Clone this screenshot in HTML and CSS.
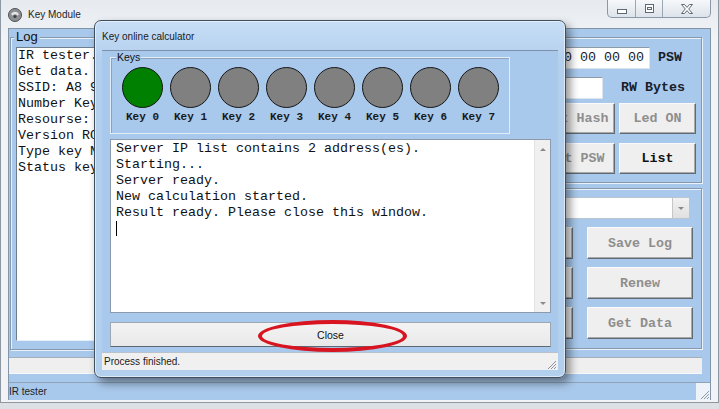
FILE: index.html
```html
<!DOCTYPE html>
<html lang="en">
<head>
<meta charset="UTF-8">
<meta name="viewport" content="width=device-width, initial-scale=1.0">
<title>Key Module</title>
<link rel="stylesheet" href="styles.css">
</head>
<body>
<div class="desktop">
    <!-- main application window -->
    <div class="main-window">
        <div class="titlebar">
            <svg class="app-icon" width="14" height="14" viewBox="0 0 14 14">
                <circle cx="7" cy="7" r="6.5" fill="#8e9093" stroke="#4d5054"/>
                <path d="M3 6 Q7 1.5 11 6 L9.5 7.5 Q7 5 4.5 7.5 Z" fill="#e6e7e8"/>
                <circle cx="7" cy="8.5" r="1.6" fill="#3e4145"/>
            </svg>
            <span class="title">Key Module</span>
            <div class="caption-buttons">
                <div class="cap">
                    <svg width="10" height="5" viewBox="0 0 10 5"><rect x="0.5" y="0.5" width="9" height="4" fill="#fff" stroke="#5d6976"/></svg>
                </div>
                <div class="cap">
                    <svg width="9" height="9" viewBox="0 0 9 9"><rect x="0.5" y="0.5" width="8" height="8" fill="#fff" stroke="#5d6976"/><rect x="2.5" y="3.5" width="4" height="2" fill="none" stroke="#5d6976"/></svg>
                </div>
                <div class="cap cap-close">
                    <svg width="12" height="10" viewBox="0 0 12 10"><path d="M0.5 0.5 H3.5 L6 3.4 L8.5 0.5 H11.5 L7.7 5 L11.5 9.5 H8.5 L6 6.6 L3.5 9.5 H0.5 L4.3 5 Z" fill="#fff" stroke="#5d6976" stroke-linejoin="round"/></svg>
                </div>
            </div>
        </div>

        <div class="client">
            <div class="content">
                <fieldset class="group log-group">
                    <legend>Log</legend>
                    <div class="log-box">
                        <div>IR tester.</div>
                        <div>Get data.</div>
                        <div>SSID: A8 9</div>
                        <div>Number Key</div>
                        <div>Resourse: </div>
                        <div>Version RO</div>
                        <div>Type key N</div>
                        <div>Status key</div>
                    </div>
                </fieldset>

                <div class="side">
                    <fieldset class="group key-group">
                        <div class="field-row">
                            <div class="field field-psw">00 00 00 00 00 00</div>
                            <span class="lbl lbl-psw">PSW</span>
                        </div>
                        <div class="field-row">
                            <div class="field field-rw"></div>
                            <span class="lbl lbl-rw">RW Bytes</span>
                        </div>
                        <div class="btn-row">
                            <button class="btn">Get Hash</button>
                            <button class="btn">Led ON</button>
                        </div>
                        <div class="btn-row">
                            <button class="btn">Set PSW</button>
                            <button class="btn on">List</button>
                        </div>
                    </fieldset>

                    <fieldset class="group data-group">
                        <div class="combo"><span class="combo-arrow"><i class="tri-down"></i></span></div>
                        <button class="btn"></button>
                        <button class="btn">Save Log</button>
                        <button class="btn"></button>
                        <button class="btn">Renew</button>
                        <button class="btn"></button>
                        <button class="btn">Get Data</button>
                    </fieldset>
                </div>
            </div>
            <div class="strip"></div>
            <div class="statusbar">
                <span>IR tester</span>
                <span class="grip">
                    <svg width="11" height="11" viewBox="0 0 11 11"><path d="M10 2 L2 10 M10 5 L5 10 M10 8 L8 10" stroke="#8c96a1" stroke-width="1"/></svg>
                </span>
            </div>
        </div>
    </div>

    <!-- modal dialog on top -->
    <div class="dialog">
        <div class="dlg-title">Key online calculator</div>
        <div class="dlg-client">
            <div class="dlg-body">
                <fieldset class="keys">
                    <legend>Keys</legend>
                    <div class="keys-row">
                        <div class="key"><div class="led active"></div><span>Key 0</span></div>
                        <div class="key"><div class="led"></div><span>Key 1</span></div>
                        <div class="key"><div class="led"></div><span>Key 2</span></div>
                        <div class="key"><div class="led"></div><span>Key 3</span></div>
                        <div class="key"><div class="led"></div><span>Key 4</span></div>
                        <div class="key"><div class="led"></div><span>Key 5</span></div>
                        <div class="key"><div class="led"></div><span>Key 6</span></div>
                        <div class="key"><div class="led"></div><span>Key 7</span></div>
                    </div>
                </fieldset>

                <div class="output">
                    <div class="output-text">
                        <div>Server IP list contains 2 address(es).</div>
                        <div>Starting...</div>
                        <div>Server ready.</div>
                        <div>New calculation started.</div>
                        <div>Result ready. Please close this window.</div>
                        <div><span class="caret"></span></div>
                    </div>
                    <div class="scroll"><i class="tri-up"></i><i class="tri-down"></i></div>
                </div>

                <button class="close-btn">Close<span class="ring"></span></button>
            </div>
            <div class="dlg-status">
                <span>Process finished.</span>
                <svg width="11" height="11" viewBox="0 0 11 11"><path d="M10 2 L2 10 M10 5 L5 10 M10 8 L8 10" stroke="#8c96a1" stroke-width="1"/></svg>
            </div>
        </div>
    </div>
</div>
</body>
</html>
```

FILE: styles.css
```css
* {
    box-sizing: border-box;
}

body {
    margin: 0;
    width: 719px;
    height: 409px;
    overflow: hidden;
    background: #dde1e6;
    font-family: "Liberation Sans", Arial, sans-serif;
}

.desktop {
    position: relative;
    width: 719px;
    height: 409px;
}

/*------------------ Main window ------------------*/
.main-window {
    height: 403px;
    display: flex;
    flex-direction: column;
    padding: 0 7px 2px 7px;
    background: linear-gradient(#e6eaef, #f1f3f6 40px);
    border: 1px solid #8e98a3;
    border-top: 0;
}

.titlebar {
    height: 28px;
    display: flex;
    align-items: flex-start;
    flex-shrink: 0;
}

.app-icon {
    margin-top: 8px;
    margin-right: 6px;
}

.title {
    margin-top: 9px;
    font-size: 10px;
    line-height: 12px;
    color: #1e1e1e;
}

.caption-buttons {
    margin-left: auto;
    display: flex;
    height: 18px;
    border: 1px solid #8a97a6;
    border-top: 0;
    border-radius: 0 0 5px 5px;
    overflow: hidden;
    background: linear-gradient(#f6f8fa, #dde3ea);
}

.cap {
    width: 27px;
    display: flex;
    align-items: center;
    justify-content: center;
}

.cap + .cap {
    border-left: 1px solid #9ba7b5;
}

.cap:first-child svg {
    margin-top: 5px;
}

.cap-close {
    width: 48px;
}

.client {
    flex: 1;
    display: flex;
    flex-direction: column;
    background: #a9c9ec;
    border: 1px solid #8395a8;
    border-bottom: 0;
}

.content {
    display: flex;
    align-items: flex-start;
    padding: 0 8px 0 1px;
}

.group {
    margin: 0;
    min-width: 0;
    border: 1px solid #8799ad;
    box-shadow: inset 1px 1px 0 #e9f1fa, 1px 1px 0 #e9f1fa;
}

.log-group {
    flex: 1;
    margin-right: 6px;
    padding: 2px 0 8px 5px;
}

.log-group legend {
    padding: 0 2px;
    margin-left: -2px;
    font-size: 13px;
    line-height: 16px;
    color: #111;
    background: #a9c9ec;
}

.log-box {
    height: 294px;
    padding-left: 1px;
    background: #fff;
    border: 1px solid #e6eef7;
    border-top-color: #6f7e8e;
    border-left-color: #6f7e8e;
    font: 13.33px/16px "Liberation Mono", "Courier New", monospace;
    color: #111;
    white-space: nowrap;
    overflow: hidden;
}

.side {
    width: 244px;
}

.key-group {
    margin-top: 8px;
    padding: 9px 5px 8px 5px;
    display: flex;
    flex-direction: column;
}

.field-row,
.btn-row {
    display: flex;
    justify-content: flex-end;
    align-items: center;
}

.field-row {
    height: 22px;
}

.field-row + .field-row {
    margin-top: 8px;
}

.field {
    height: 22px;
    padding-right: 5px;
    background: #fff;
    border: 1px solid #dbe5ef;
    border-top-color: #8d9aa8;
    font: 13.33px/20px "Liberation Mono", "Courier New", monospace;
    color: #1b1b1b;
    text-align: right;
    white-space: nowrap;
    overflow: hidden;
}

.field-psw {
    width: 180px;
}

.field-rw {
    width: 130px;
}

.lbl {
    font: bold 13.33px/16px "Liberation Mono", "Courier New", monospace;
    color: #17202a;
}

.lbl-psw {
    margin-left: 8px;
    margin-right: 14px;
}

.lbl-rw {
    margin-left: 18px;
    margin-right: 11px;
}

.btn-row {
    gap: 4px;
    height: 31px;
    margin-top: 4px;
}

.btn-row + .btn-row {
    margin-top: 9px;
}

.btn-row .btn {
    width: 77px;
    height: 31px;
}

.btn {
    padding: 0;
    background: #efefef;
    border: 1px solid;
    border-color: #fbfbfb #5f6a75 #5f6a75 #fbfbfb;
    box-shadow: inset -1px -1px 0 #a9a9a9;
    font: bold 13.33px "Liberation Mono", "Courier New", monospace;
    color: #8e8e8e;
    white-space: nowrap;
}

.btn.on {
    color: #111;
}

.data-group {
    margin-top: 5px;
    padding: 8px 8px 9px 5px;
    display: grid;
    grid-template-columns: 100px 106px;
    grid-template-rows: 22px 32px 32px 32px;
    column-gap: 14px;
    row-gap: 8px;
    justify-content: end;
}

.combo {
    grid-column: 1 / 3;
    margin-right: 3px;
    display: flex;
    justify-content: flex-end;
    background: #fff;
    border: 1px solid #b9c5d1;
}

.combo-arrow {
    width: 17px;
    display: flex;
    align-items: center;
    justify-content: center;
    background: linear-gradient(#f2f2f2, #e0e0e0);
    border-left: 1px solid #c6c6c6;
}

.tri-down,
.tri-up {
    display: block;
    width: 0;
    height: 0;
    border-left: 3px solid transparent;
    border-right: 3px solid transparent;
}

.tri-down {
    border-top: 3px solid #8a8a8a;
}

.tri-up {
    border-bottom: 3px solid #8a8a8a;
}

.strip {
    height: 17px;
    margin: 7px 8px 0 0;
    background: #efefef;
    border-top: 1px solid #a4afba;
    border-bottom: 1px solid #f8f8f8;
}

.statusbar {
    margin-top: auto;
    height: 18px;
    display: flex;
    align-items: center;
    justify-content: space-between;
    border-top: 1px solid #8ea2b8;
    font-size: 10px;
    color: #1e1e1e;
}

.grip {
    align-self: stretch;
    width: 14px;
    display: flex;
    align-items: flex-end;
    justify-content: flex-end;
    background: #eef3f9;
}

/*------------------ Dialog ------------------*/
.dialog {
    position: absolute;
    left: 94px;
    top: 20px;
    width: 472px;
    height: 358px;
    display: flex;
    flex-direction: column;
    padding: 0 7px 7px 7px;
    background: linear-gradient(#c7def5, #b3cfee 40px);
    border: 1px solid #3f4f60;
    border-radius: 7px;
    box-shadow: inset 0 0 0 1px rgba(255, 255, 255, .55), 4px 5px 10px rgba(0, 0, 0, .45);
}

.dlg-title {
    height: 29px;
    padding-top: 10px;
    font-size: 10px;
    line-height: 12px;
    color: #1b1b1b;
    flex-shrink: 0;
}

.dlg-client {
    flex: 1;
    display: flex;
    flex-direction: column;
    background: #a9c9ec;
    border-top: 1px solid #7d92aa;
}

.dlg-body {
    display: flex;
    flex-direction: column;
    padding: 0 7px 0 8px;
}

.keys {
    margin: 0;
    width: 400px;
    height: 83px;
    padding: 4px 0 0 11px;
    border: 1px solid #e3edf8;
    box-shadow: inset 1px 1px 0 #8ea3ba;
}

.keys legend {
    padding: 0 1px;
    margin-left: -6px;
    font-size: 10.5px;
    line-height: 12px;
    color: #111;
    background: #a9c9ec;
}

.keys-row {
    display: flex;
    gap: 7px;
}

.key {
    width: 41px;
    display: flex;
    flex-direction: column;
    align-items: center;
}

.led {
    width: 41px;
    height: 41px;
    border-radius: 50%;
    background: #808080;
    border: 1px solid #151515;
}

.led.active {
    background: #008000;
}

.key span {
    margin-top: 3px;
    font: bold 11px/13px "Liberation Mono", "Courier New", monospace;
    color: #1a1a1a;
    white-space: nowrap;
}

.output {
    margin-top: 5px;
    height: 174px;
    display: flex;
    background: #fff;
    border: 1px solid #8c9aab;
}

.output-text {
    flex: 1;
    padding: 1px 0 0 5px;
    font: 13.33px/16px "Liberation Mono", "Courier New", monospace;
    color: #111;
    white-space: nowrap;
}

.caret {
    display: inline-block;
    width: 1px;
    height: 15px;
    vertical-align: top;
    background: #000;
}

.scroll {
    width: 16px;
    display: flex;
    flex-direction: column;
    align-items: center;
    justify-content: space-between;
    padding: 8px 0 7px;
    background: #f0f0f0;
    border-left: 1px solid #e3e3e3;
}

.close-btn {
    position: relative;
    margin-top: 9px;
    height: 25px;
    padding: 0;
    background: linear-gradient(#f3f3f3, #e9e9e9);
    border: 1px solid #9ca7b2;
    border-bottom-color: #5d6975;
    font-family: "Liberation Sans", Arial, sans-serif;
    font-size: 10.5px;
    color: #111;
}

/* annotation drawn over the button */
.ring {
    position: absolute;
    left: 147px;
    top: -3px;
    width: 149px;
    height: 32px;
    border: 4px solid #d7141f;
    border-radius: 50%;
}

.dlg-status {
    margin-top: auto;
    height: 18px;
    display: flex;
    align-items: center;
    justify-content: space-between;
    padding: 0 1px 0 2px;
    background: #f0f0f0;
    border-top: 1px solid #b7c2cd;
    font-size: 10px;
    color: #1b1b1b;
}

.dlg-status svg {
    align-self: flex-end;
}
```
